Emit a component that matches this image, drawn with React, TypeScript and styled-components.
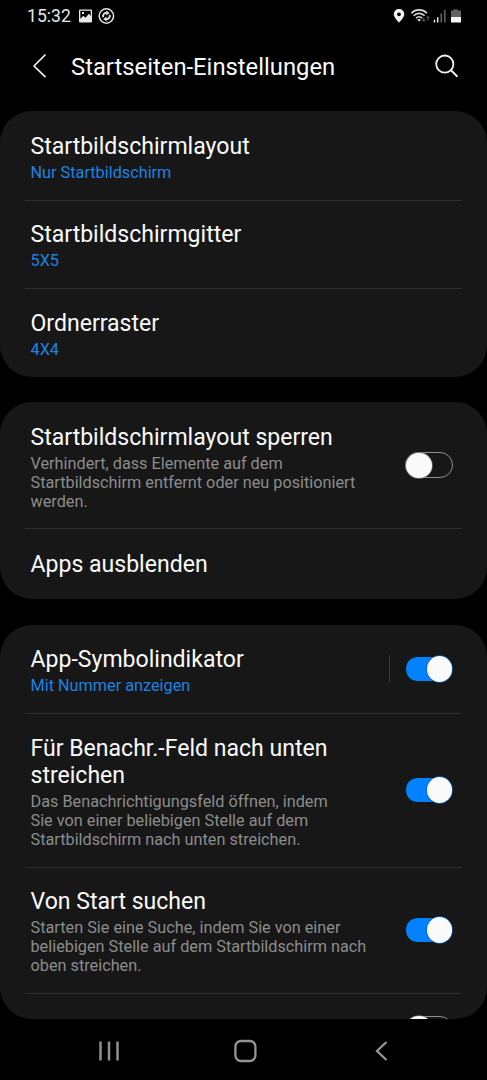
import React from 'react';
import styled, { createGlobalStyle } from 'styled-components';

const GlobalStyle = createGlobalStyle`
  * { box-sizing: border-box; }
  body { margin: 0; background: #000; overflow: hidden; }
`;

const Screen = styled.div`
  width: 487px;
  height: 1080px;
  display: flex;
  flex-direction: column;
  overflow: hidden;
  background: #000;
  color: #fafafa;
  font-family: Roboto, 'Liberation Sans', sans-serif;
`;

const StatusBar = styled.header`
  height: 31px;
  flex: none;
  display: flex;
  align-items: center;
  justify-content: space-between;
  padding: 0 25px 0 27px;
`;

const StatusGroup = styled.div`
  display: flex;
  align-items: center;
`;

const Clock = styled.span`
  width: 51px;
  font-size: 17.6px;
  line-height: 22px;
  color: #e6e6e6;
  white-space: nowrap;
`;

const TitleBar = styled.div`
  height: 80.45px;
  flex: none;
  display: flex;
  align-items: flex-start;
  padding: 19px 28px 0 29px;
`;

const PageTitle = styled.h1`
  flex: 1;
  margin: 0 0 0 20px;
  font-size: 23.8px;
  font-weight: 400;
  line-height: 34px;
  white-space: nowrap;
`;

const Content = styled.main`
  height: 907.55px;
  flex: none;
  display: flex;
  flex-direction: column;
  gap: 25.6px;
  overflow: hidden;
  border-radius: 0 0 32px 32px;
`;

const Card = styled.section`
  flex: none;
  border-radius: 32px;
  background: #171717;
`;

const Row = styled.div<{ $compact?: boolean }>`
  display: flex;
  align-items: center;
  height: ${(p) => (p.$compact ? '70.5px' : 'auto')};
  padding: 0 34px 0 30px;
`;

const Divider = styled.hr`
  height: 1px;
  margin: 0 25px -0.6px;
  border: 0;
  background: #303030;
`;

const RowText = styled.div<{ $compact?: boolean }>`
  flex: 1;
  padding: ${(p) => (p.$compact ? '1px 0 0 0.5px' : '21.2px 0 17px 0.5px')};
  white-space: pre;
`;

const Label = styled.div`
  font-size: 23.05px;
  line-height: 27px;
`;

const Sub = styled.div<{ $accent?: boolean }>`
  margin-top: 4.1px;
  font-size: 16.25px;
  line-height: 18.9px;
  color: ${(p) => (p.$accent ? '#1f82e0' : '#8c8c8c')};
`;

const SwitchSeparator = styled.div`
  width: 1px;
  height: 28px;
  margin-right: 15px;
  background: #3c3c3c;
`;

const Track = styled.div<{ $on?: boolean }>`
  width: 48px;
  height: ${(p) => (p.$on ? '24px' : '26px')};
  flex: none;
  display: flex;
  align-items: center;
  justify-content: ${(p) => (p.$on ? 'flex-end' : 'flex-start')};
  border-radius: 14px;
  background: ${(p) => (p.$on ? '#0381fe' : 'transparent')};
  background-clip: padding-box;
  border: ${(p) => (p.$on ? '0 solid transparent' : '1px solid #8f8f8f')};
  border-width: ${(p) => (p.$on ? '0 1px' : '1px')};
`;

const Thumb = styled.span<{ $on?: boolean }>`
  width: 25.6px;
  height: 25.6px;
  flex: none;
  margin: ${(p) => (p.$on ? '0 -0.3px 0 0' : '0 0 0 -0.1px')};
  border-radius: 50%;
  background: #fafafa;
  box-shadow: 0 0 0 0.7px ${(p) => (p.$on ? '#0a5fb5' : '#777')};
`;

const NavBar = styled.nav`
  flex: 1;
  display: flex;
  align-items: center;
  justify-content: space-between;
  padding: 3px 97px 0;
`;

function Switch({ on }: { on?: boolean }) {
  return (
    <Track $on={on}>
      <Thumb $on={on} />
    </Track>
  );
}

interface SettingProps {
  label: string;
  sub?: string;
  accent?: boolean;
  toggle?: boolean;
  separator?: boolean;
}

function Setting({ label, sub, accent, toggle, separator }: SettingProps) {
  return (
    <Row $compact={!sub}>
      <RowText $compact={!sub}>
        <Label>{label}</Label>
        {sub && <Sub $accent={accent}>{sub}</Sub>}
      </RowText>
      {separator && <SwitchSeparator />}
      {toggle !== undefined && <Switch on={toggle} />}
    </Row>
  );
}

export default function App() {
  return (
    <>
      <GlobalStyle />
      <Screen>
        <StatusBar>
          <StatusGroup>
            <Clock>15:32</Clock>
            <svg width="38" height="18" viewBox="0 0 38 18">
              <path fill="#e8e8e8" fillRule="evenodd" d="M2 2.5h11a1 1 0 0 1 1 1v11a1 1 0 0 1-1 1H2a1 1 0 0 1-1-1v-11a1 1 0 0 1 1-1ZM2.3 3.8v8l3-3 2.2 2 3.4-4 1.8 2.1V3.8ZM4 5h2v2H4Z" />
              <circle cx="28.4" cy="9" r="7.2" fill="none" stroke="#e0e0e0" strokeWidth="1.5" />
              <path d="M25.2 10.3a3.4 3.4 0 0 1 3.6-4.5M31.6 7.7a3.4 3.4 0 0 1-3.6 4.5" fill="none" stroke="#e0e0e0" strokeWidth="1.9" />
              <path d="m28.3 3.4 3.3 2.5-3.3 2.5ZM28.5 9.6l-3.3 2.5 3.3 2.5Z" fill="#e0e0e0" />
            </svg>
          </StatusGroup>
          <StatusGroup>
            <svg width="70" height="18" viewBox="0 0 70 18">
              <path fill="#f2f2f2" fillRule="evenodd" d="M7 2a5 5 0 0 0-5.2 5.2C1.8 10.5 7 15.6 7 15.6s5.3-5.1 5.3-8.4A5.1 5.1 0 0 0 7 2Zm0 3.4a1.9 1.9 0 1 1 0 3.8 1.9 1.9 0 0 1 0-3.8Z" />
              <g fill="none" stroke="#d8d8d8" strokeWidth="1.6">
                <path d="M19.3 6.1a11 11 0 0 1 15.6 0" />
                <path d="M21.6 8.7a7.6 7.6 0 0 1 11 0" />
                <path d="M24 11.2a4.4 4.4 0 0 1 6.2 0" />
              </g>
              <path d="m25.3 12.7 1.8-1 1.8 1-1.8 1.9Z" fill="#e8e8e8" />
              <path d="M31.8 10.5v3.7m-1.5-1.4 1.5 1.6 1.5-1.6M36 13.4V9.5m-1.5 1.6L36 9.5l1.5 1.6" fill="none" stroke="#686868" strokeWidth="1" />
              <path d="M42.5 12.8v2.7M45.7 10.3v5.2" stroke="#e8e8e8" strokeWidth="1.5" />
              <path d="M49.3 6.5v9M52.8 3v12.5" stroke="#686868" strokeWidth="1.5" />
              <path d="M61.5 2.2h4v1.3h3.5v6.5h-10V3.5h2.5Z" fill="#606060" />
              <path d="M59 10h10v5.5H59Z" fill="#f5f5f5" />
            </svg>
          </StatusGroup>
        </StatusBar>

        <TitleBar>
          <svg width="22" height="32" viewBox="0 0 22 32">
            <path d="M16 5 5 16l11 10.7" fill="none" stroke="#f2f2f2" strokeWidth="1.7" strokeLinecap="round" strokeLinejoin="round" />
          </svg>
          <PageTitle>Startseiten-Einstellungen</PageTitle>
          <svg width="26" height="32" viewBox="0 0 26 32">
            <circle cx="11.8" cy="14.1" r="8.6" fill="none" stroke="#f2f2f2" strokeWidth="1.8" />
            <path d="m18 20.3 6 5.9" stroke="#f2f2f2" strokeWidth="1.9" strokeLinecap="round" />
          </svg>
        </TitleBar>

        <Content>
          <Card>
            <Setting label="Startbildschirmlayout" sub="Nur Startbildschirm" accent />
            <Divider />
            <Setting label="Startbildschirmgitter" sub="5X5" accent />
            <Divider />
            <Setting label="Ordnerraster" sub="4X4" accent />
          </Card>

          <Card>
            <Setting
              label="Startbildschirmlayout sperren"
              sub={'Verhindert, dass Elemente auf dem\nStartbildschirm entfernt oder neu positioniert\nwerden.'}
              toggle={false}
            />
            <Divider />
            <Setting label="Apps ausblenden" />
          </Card>

          <Card>
            <Setting label="App-Symbolindikator" sub="Mit Nummer anzeigen" accent separator toggle />
            <Divider />
            <Setting
              label={'Für Benachr.-Feld nach unten\nstreichen'}
              sub={'Das Benachrichtigungsfeld öffnen, indem\nSie von einer beliebigen Stelle auf dem\nStartbildschirm nach unten streichen.'}
              toggle
            />
            <Divider />
            <Setting
              label="Von Start suchen"
              sub={'Starten Sie eine Suche, indem Sie von einer\nbeliebigen Stelle auf dem Startbildschirm nach\noben streichen.'}
              toggle
            />
            <Divider />
            <Setting label="" toggle={false} />
          </Card>
        </Content>

        <NavBar>
          <svg width="24" height="24" viewBox="0 0 24 24">
            <path d="M3.5 2.5v19M12 2.5v19M20.5 2.5v19" stroke="#8f8f8f" strokeWidth="2.5" />
          </svg>
          <svg width="26" height="24" viewBox="0 0 26 24">
            <rect x="4.4" y="2" width="20" height="20" rx="5.5" fill="none" stroke="#959595" strokeWidth="2.3" />
          </svg>
          <svg width="24" height="24" viewBox="0 0 24 24">
            <path d="M20.5 3 11 12l9.5 9" fill="none" stroke="#959595" strokeWidth="2.3" />
          </svg>
        </NavBar>
      </Screen>
    </>
  );
}
